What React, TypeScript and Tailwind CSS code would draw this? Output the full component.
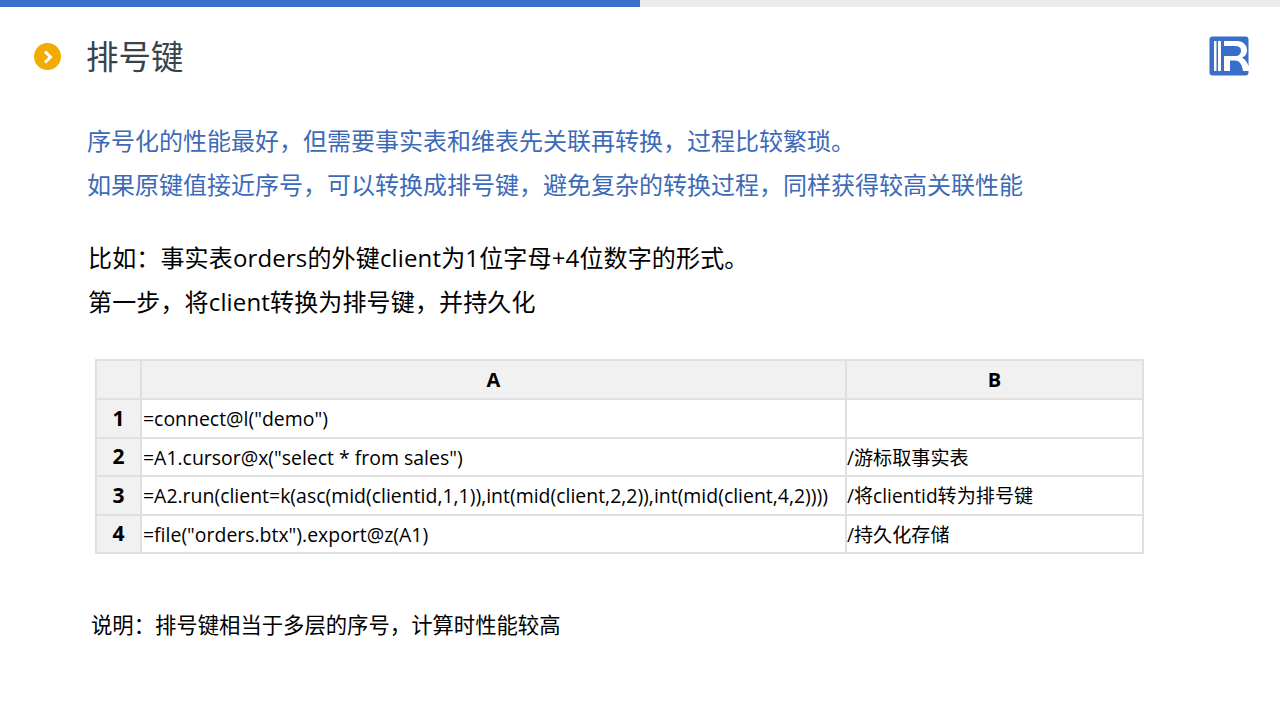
const font = { fontFamily: '"Open Sans", "Noto Sans CJK SC", sans-serif' };

const rows = [
  ["1", '=connect@l("demo")', ""],
  ["2", '=A1.cursor@x("select * from sales")', "/游标取事实表"],
  ["3", "=A2.run(client=k(asc(mid(clientid,1,1)),int(mid(client,2,2)),int(mid(client,4,2))))", "/将clientid转为排号键"],
  ["4", '=file("orders.btx").export@z(A1)', "/持久化存储"],
];

function Logo() {
  return (
    <svg width="40" height="40" viewBox="0 0 40 40">
      <rect x="0.500" y="0.500" width="39" height="39" rx="3" fill="#3a6fc9" />
      <rect x="5" y="5" width="2.500" height="30" fill="#fff" />
      <rect x="9" y="5" width="3" height="30" fill="#fff" />
      <path d="M15 5H28C34 5 38 9 38 14C38 18 36 20.500 33 21.500C36 23 38 26 40 31V35H34C33 29 31 24.500 26 24.500H21V35H15V20H26C30 20 32 18 32 14.500C32 11.500 30 10 26 10H15Z" fill="#fff" />
    </svg>
  );
}

export default function App() {
  return (
    <div className="w-[1280px] h-[720px] bg-white overflow-hidden flex flex-col" style={font}>
      <div className="flex h-[7px] bg-[#ebebeb]">
        <div className="w-[640px] bg-[#3c6fcb]" />
      </div>

      <header className="flex items-center h-[100px] pl-[34px] pr-[31px] pb-[1px]">
        <div className="w-[27px] h-[27px] rounded-full bg-[#f2ab00] flex items-center justify-center">
          <svg width="16" height="16" viewBox="0 0 16 16">
            <path d="M5 2.500L10.500 8L5 13.500" fill="none" stroke="#fff" strokeWidth="3" />
          </svg>
        </div>
        <h1 className="ml-[25px] text-[32.500px] leading-[40px] text-[#3a424c]">排号键</h1>
        <div className="ml-auto mb-[2px]">
          <Logo />
        </div>
      </header>

      <section className="pl-[87px] text-[24px] leading-[44px] text-[#3c6ab8] mt-[12px]">
        <p>序号化的性能最好，但需要事实表和维表先关联再转换，过程比较繁琐。</p>
        <p>如果原键值接近序号，可以转换成排号键，避免复杂的转换过程，同样获得较高关联性能</p>
      </section>

      <section className="pl-[88px] mt-[29px] text-[24px] leading-[44px] text-black tracking-[0.15px]">
        <p>比如：事实表orders的外键client为1位字母+4位数字的形式。</p>
        <p>第一步，将client转换为排号键，并持久化</p>
      </section>

      <div className="pl-[95px] mt-[35px]">
        <table className="table-fixed border-collapse w-[1047px] text-black">
          <colgroup>
            <col className="w-[45px]" />
            <col className="w-[705px]" />
            <col className="w-[297px]" />
          </colgroup>
          <thead>
            <tr className="h-[39px] bg-[#f1f1f1] font-bold text-[20px]">
              <th className="border-2 border-[#e0e0e0]" />
              <th className="border-2 border-[#e0e0e0]">A</th>
              <th className="border-2 border-[#e0e0e0]">B</th>
            </tr>
          </thead>
          <tbody>
            {rows.map((r) => (
              <tr key={r[0]} className="h-[38.500px]">
                <td className="border-2 border-[#e0e0e0] bg-[#f1f1f1] text-center font-bold text-[21px]">{r[0]}</td>
                <td className="border-2 border-[#e0e0e0] pt-[1px] pl-[1px] text-[19.450px] whitespace-nowrap">{r[1]}</td>
                <td className="border-2 border-[#e0e0e0] pt-[3px] text-[19.100px] whitespace-nowrap">{r[2]}</td>
              </tr>
            ))}
          </tbody>
        </table>
      </div>

      <p className="pl-[91px] mt-[51px] text-[21.350px] leading-[40px] text-black">说明：排号键相当于多层的序号，计算时性能较高</p>
    </div>
  );
}
